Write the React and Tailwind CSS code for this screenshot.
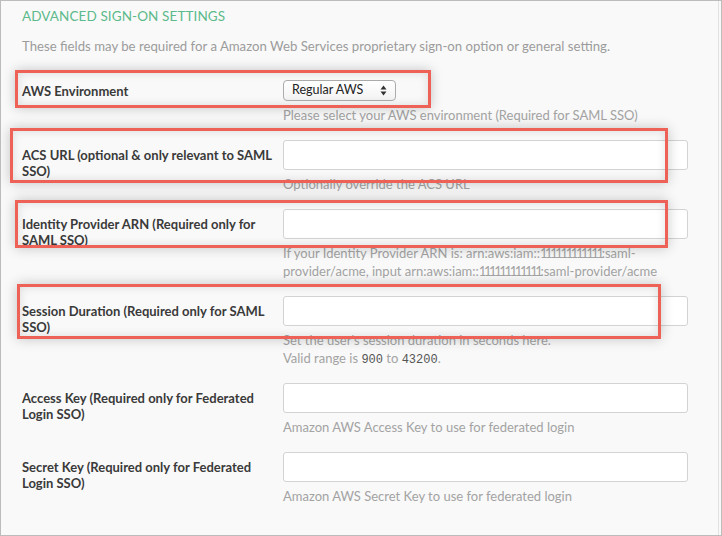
import React from 'react';

const FONT = { fontFamily: 'Lato, "Open Sans", Arial, sans-serif' };
const MONO = { fontFamily: '"Liberation Mono", "DejaVu Sans Mono", monospace' };

function Hint({ children }) {
  return <p className="mt-[5px] text-[13px] leading-[18px] text-[#a3a3a3]">{children}</p>;
}

function Label({ children, top = 'pt-[7px]' }) {
  return (
    <div className={`w-[261px] shrink-0 ${top} text-[13px] leading-[16px] font-bold text-[#3a3a3a]`}>
      {children}
    </div>
  );
}

function TextInput() {
  return <div className="h-[30px] w-[405px] rounded-[3px] border border-[#d3d3d3] bg-white" />;
}

function Row({ label, labelTop, control, hints }) {
  return (
    <div className="flex">
      <Label top={labelTop}>{label}</Label>
      <div className="w-[405px]">
        {control}
        {hints}
      </div>
    </div>
  );
}

// the account id digits run narrower in the original face
const Digits = () => <span className="tracking-[-2.4px]">111111111111</span>;

// annotation frames drawn over the form
const MARKS = [
  { id: 'env', cls: 'left-[14px] top-[69px] w-[416px] h-[38px]' },
  { id: 'acs', cls: 'left-[9px] top-[127px] w-[658px] h-[55px]' },
  { id: 'arn', cls: 'left-[14px] top-[199px] w-[653px] h-[48px]' },
  { id: 'dur', cls: 'left-[16px] top-[283px] w-[644px] h-[55px]' },
];

export default function App() {
  return (
    <div style={FONT} className="relative w-[722px] h-[536px] overflow-hidden border border-[#bcbcbc] bg-[#f9f9f9]">
      <div className="h-full mr-[2px] border-r border-[#e2e2e2] pl-[21px] pt-[5px]">
        <h2 className="text-[13.5px] leading-[20px] tracking-[0.1px] text-[#5cba8b]">ADVANCED SIGN-ON SETTINGS</h2>
        <p className="mt-[11px] text-[13.2px] leading-[18px] text-[#9c9c9c]">
          These fields may be required for a Amazon Web Services proprietary sign-on option or general setting.
        </p>

        <div className="mt-[25px] flex flex-col gap-[16px]">
          <Row
            label="AWS Environment"
            labelTop="pt-[3px]"
            control={
              <div className="flex h-[21px] w-[113px] items-center justify-between rounded-[4px] border border-[#acacac] bg-gradient-to-b from-white to-[#f3f3f3] pl-[8px] pr-[8px]">
                <span className="text-[12.5px] text-[#222]">Regular AWS</span>
                <svg width="7" height="11" viewBox="0 0 7 11">
                  <path d="M3.5 0.5 L6.5 4.5 H0.5 Z" fill="#333" />
                  <path d="M3.5 10.5 L6.5 6.5 H0.5 Z" fill="#333" />
                </svg>
              </div>
            }
            hints={<Hint>Please select your AWS environment (Required for SAML SSO)</Hint>}
          />
          <Row
            label={<>ACS URL (optional &amp; only relevant to SAML<br />SSO)</>}
            control={<TextInput />}
            hints={<Hint>Optionally override the ACS URL</Hint>}
          />
          <Row
            label={<>Identity Provider ARN (Required only for<br />SAML SSO)</>}
            control={<TextInput />}
            hints={
              <Hint>
                If your Identity Provider ARN is: arn:aws:iam::<Digits />:saml-
                <br />
                provider/acme, input arn:aws:iam::<Digits />:saml-provider/acme
              </Hint>
            }
          />
          <Row
            label={<>Session Duration (Required only for SAML<br />SSO)</>}
            control={<TextInput />}
            hints={
              <Hint>
                Set the user's session duration in seconds here.
                <br />
                Valid range is{' '}
                <code className="text-[12px] leading-none text-[#555]" style={MONO}>900</code>{' '}
                to{' '}
                <code className="text-[12px] leading-none text-[#555]" style={MONO}>43200</code>.
              </Hint>
            }
          />
          <Row
            label={<>Access Key (Required only for Federated<br />Login SSO)</>}
            control={<TextInput />}
            hints={<Hint>Amazon AWS Access Key to use for federated login</Hint>}
          />
          <Row
            label={<>Secret Key (Required only for Federated<br />Login SSO)</>}
            control={<TextInput />}
            hints={<Hint>Amazon AWS Secret Key to use for federated login</Hint>}
          />
        </div>
      </div>

      {MARKS.map((m) => (
        <div
          key={m.id}
          className={`pointer-events-none absolute ${m.cls} border-[3px] border-[#ee6157] shadow-[0_0_12px_rgba(0,0,0,0.22),inset_0_0_10px_rgba(0,0,0,0.12)]`}
        />
      ))}
    </div>
  );
}
